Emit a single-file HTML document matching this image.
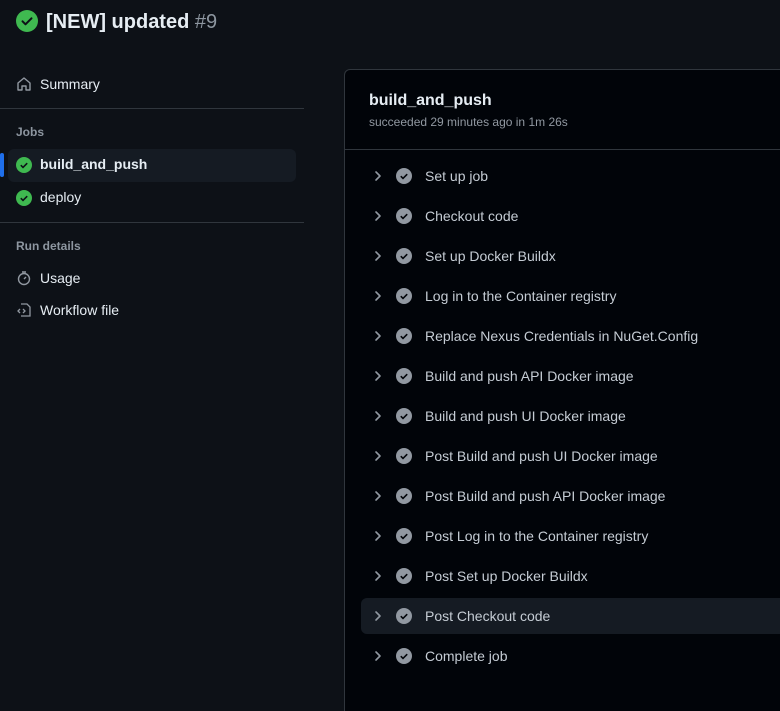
<!DOCTYPE html>
<html style="overflow:hidden;height:711px"><head><style>
*{margin:0;padding:0;box-sizing:border-box}
body{width:780px;height:711px;overflow:hidden;background:#0d1117;font-family:"Liberation Sans",sans-serif;color:#e6edf3;position:relative}
.abs{position:absolute}
.t{font-size:14px;white-space:nowrap}
.sec{font-size:12px;font-weight:bold;color:#8d96a0}
.hr{position:absolute;left:0;width:304px;height:1px;background:#30363d}
.panel{position:absolute;left:344px;top:69px;width:460px;height:642px;background:#010409;border:1px solid #30363d;border-bottom:none;border-radius:6px 6px 0 0;overflow:hidden}
.step{position:absolute;left:16px;width:460px;height:36px;border-radius:6px}
.step .chev{position:absolute;left:10px;top:11px}
.step .ic{position:absolute;left:35px;top:10px}
.step span{position:absolute;left:64px;top:10px;font-size:14px;color:#c5ccd4;white-space:nowrap}
</style></head><body>
<svg class="abs" style="left:16px;top:10px" width="22" height="22" viewBox="0 0 22 22"><circle cx="11" cy="11" r="11" fill="#3fb950"/><path d="M6.5 11.3l3 3 6-6" stroke="#0d1117" stroke-width="2" fill="none" stroke-linecap="round" stroke-linejoin="round"/></svg>
<div class="abs" style="left:46px;top:11px;font-size:20px;font-weight:bold;white-space:nowrap">[NEW] updated <span style="font-weight:normal;color:#8d96a0">#9</span></div>

<svg class="abs" style="left:16px;top:76px" width="16" height="16" viewBox="0 0 16 16"><path d="M2 7l6-5 6 5v7h-4v-4H6v4H2z" stroke="#9198a1" stroke-width="1.4" fill="none" stroke-linejoin="round"/></svg>
<div class="abs t" style="left:40px;top:76px">Summary</div>
<div class="hr" style="top:108px"></div>
<div class="abs sec" style="left:16px;top:125px">Jobs</div>
<div class="abs" style="left:8px;top:149px;width:288px;height:33px;background:#151b23;border-radius:6px"></div>
<div class="abs" style="left:0;top:153px;width:4px;height:24px;background:#1f6feb;border-radius:2px"></div>
<svg class="abs" style="left:16px;top:157px" width="16" height="16" viewBox="0 0 16 16"><circle cx="8" cy="8" r="8" fill="#3fb950"/><path d="M4.8 8.2l2.2 2.2 4.2-4.2" stroke="#0d1117" stroke-width="1.6" fill="none"/></svg>
<div class="abs t" style="left:40px;top:156px;font-weight:bold">build_and_push</div>
<svg class="abs" style="left:16px;top:190px" width="16" height="16" viewBox="0 0 16 16"><circle cx="8" cy="8" r="8" fill="#3fb950"/><path d="M4.8 8.2l2.2 2.2 4.2-4.2" stroke="#0d1117" stroke-width="1.6" fill="none"/></svg>
<div class="abs t" style="left:40px;top:189px">deploy</div>
<div class="hr" style="top:222px"></div>
<div class="abs sec" style="left:16px;top:239px">Run details</div>
<svg class="abs" style="left:16px;top:270px" width="16" height="16" viewBox="0 0 16 16"><circle cx="8" cy="9" r="5.5" stroke="#9198a1" stroke-width="1.4" fill="none"/><path d="M6 2h4M8 9l2-2" stroke="#9198a1" stroke-width="1.4"/></svg>
<div class="abs t" style="left:40px;top:270px">Usage</div>
<svg class="abs" style="left:16px;top:302px" width="16" height="16" viewBox="0 0 16 16"><path d="M5 2h6l3 3v9H5M4 7l-2 2 2 2M7 7l2 2-2 2" stroke="#9198a1" stroke-width="1.3" fill="none"/></svg>
<div class="abs t" style="left:40px;top:302px">Workflow file</div>

<div class="panel">
<div class="abs" style="left:24px;top:22px;font-size:16px;font-weight:bold">build_and_push</div>
<div class="abs" style="left:24px;top:45px;font-size:12px;color:#9198a1;white-space:nowrap">succeeded 29 minutes ago in 1m 26s</div>
<div class="abs" style="left:0;top:79px;width:460px;height:1px;background:#30363d"></div>
<div id="steps"></div>
</div>
<script>
var s=["Set up job","Checkout code","Set up Docker Buildx","Log in to the Container registry","Replace Nexus Credentials in NuGet.Config","Build and push API Docker image","Build and push UI Docker image","Post Build and push UI Docker image","Post Build and push API Docker image","Post Log in to the Container registry","Post Set up Docker Buildx","Post Checkout code","Complete job"];
var h="";s.forEach(function(n,i){var top=88+i*40;
h+='<div class="step" style="top:'+top+'px;'+(i==11?'background:#151b23':'')+'"><svg class="chev" width="14" height="14" viewBox="0 0 14 14"><path d="M5 3l4 4-4 4" stroke="#9198a1" stroke-width="1.6" fill="none" stroke-linecap="round" stroke-linejoin="round"/></svg><svg class="ic" width="16" height="16" viewBox="0 0 16 16"><circle cx="8" cy="8" r="8" fill="#9198a1"/><path d="M4.8 8.2l2.2 2.2 4.2-4.2" stroke="#010409" stroke-width="1.6" fill="none"/></svg><span>'+n+'</span></div>';});
document.getElementById("steps").innerHTML=h;
</script>
</body></html>
